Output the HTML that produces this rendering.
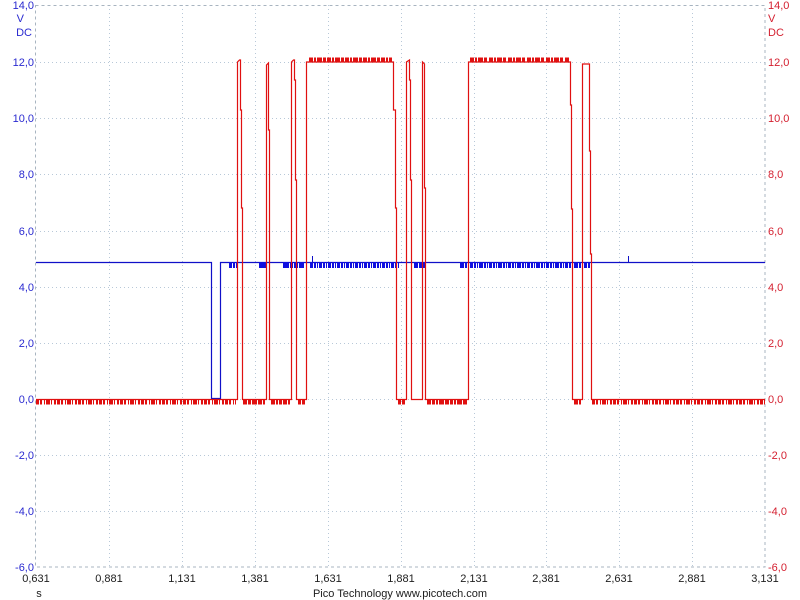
<!DOCTYPE html><html><head><style>
body{margin:0;background:#fff;width:800px;height:600px;overflow:hidden;font-family:"Liberation Sans",Arial,sans-serif}
svg{position:absolute;left:0;top:0}
text{font-size:11px;font-family:"Liberation Sans",Arial,sans-serif}
</style></head><body>
<svg width="800" height="600" viewBox="0 0 800 600">
<g stroke="#b8c8d8" stroke-width="1" stroke-dasharray="1 3">
<line x1="36" y1="62.5" x2="765" y2="62.5"/><line x1="36" y1="118.5" x2="765" y2="118.5"/><line x1="36" y1="174.5" x2="765" y2="174.5"/><line x1="36" y1="231.5" x2="765" y2="231.5"/><line x1="36" y1="287.5" x2="765" y2="287.5"/><line x1="36" y1="343.5" x2="765" y2="343.5"/><line x1="36" y1="399.5" x2="765" y2="399.5"/><line x1="36" y1="455.5" x2="765" y2="455.5"/><line x1="36" y1="511.5" x2="765" y2="511.5"/>
<line x1="109.5" y1="5" x2="109.5" y2="567"/><line x1="182.5" y1="5" x2="182.5" y2="567"/><line x1="255.5" y1="5" x2="255.5" y2="567"/><line x1="328.5" y1="5" x2="328.5" y2="567"/><line x1="401.5" y1="5" x2="401.5" y2="567"/><line x1="474.5" y1="5" x2="474.5" y2="567"/><line x1="546.5" y1="5" x2="546.5" y2="567"/><line x1="619.5" y1="5" x2="619.5" y2="567"/><line x1="692.5" y1="5" x2="692.5" y2="567"/>
</g>
<g stroke="#a8b4c0" stroke-width="1" stroke-dasharray="3 3" fill="none">
<rect x="35.5" y="5.5" width="729.5" height="561.5"/>
</g>
<!-- blue -->
<polyline fill="none" stroke="#1010c8" stroke-width="1.2" points="36,262.5 211.5,262.5 211.5,398.5 220.5,398.5 220.5,262.5 765,262.5"/>
<g stroke="#1010e0" stroke-width="6">
<line x1="229" y1="265" x2="237" y2="265" stroke-dasharray="3 1 2 1"/>
<line x1="259" y1="265" x2="266" y2="265"/>
<line x1="283" y1="265" x2="304" y2="265" stroke-dasharray="6 1 3 1 4 1"/>
<line x1="310" y1="265" x2="400" y2="265" stroke-dasharray="3 1 2 1 1 1 3 1 2 1 1 1"/>
<line x1="414" y1="265" x2="425" y2="265" stroke-dasharray="4 1 3 1"/>
<line x1="460" y1="265" x2="590" y2="265" stroke-dasharray="4 1 2 1 1 1 3 1 2 1 1 1"/>
</g>
<line x1="312.5" y1="256" x2="312.5" y2="263" stroke="#1010c8"/>
<line x1="628.5" y1="256" x2="628.5" y2="263" stroke="#1010c8"/>
<!-- red -->
<polyline fill="none" stroke="#e01010" stroke-width="1.2" points="36,399.5 237.5,399.5 237.5,62 239.5,60 240.5,60 240.5,110 241.5,110 241.5,208 242.5,208 242.5,399.5 266.5,399.5 266.5,65 268.5,63 268.5,130 269.5,130 269.5,399.5 291.5,399.5 291.5,62 293.5,60 294.5,60 294.5,80 295.5,80 295.5,180 296.5,180 296.5,399.5 306.5,399.5 306.5,62 393.5,62 393.5,110 395.5,110 395.5,208 396.5,208 396.5,399.5 406.5,399.5 406.5,62 409.5,60 409.5,80 410.5,80 410.5,180 411.5,180 411.5,399.5 422.5,399.5 422.5,62 424.5,64 424.5,188 425.5,188 425.5,399.5 468.5,399.5 468.5,62 570.5,62 570.5,105 571.5,105 571.5,209 572.5,209 572.5,399.5 582.5,399.5 582.5,64 589.5,64 589.5,151 590.5,151 590.5,254 591.5,254 591.5,399.5 765,399.5"/>
<g stroke="#e01010" stroke-width="5">
<line x1="36" y1="402" x2="236" y2="402" stroke-dasharray="3 1 2 2 1 1 4 1 1 2 2 1"/>
<line x1="243" y1="402" x2="265" y2="402" stroke-dasharray="4 1 3 1 5 1"/>
<line x1="271" y1="402" x2="290" y2="402" stroke-dasharray="4 1 2 1 3 1"/>
<line x1="298" y1="402" x2="305" y2="402" stroke-dasharray="3 1"/>
<line x1="398" y1="402" x2="405" y2="402" stroke-dasharray="3 1"/>
<line x1="427" y1="402" x2="467" y2="402" stroke-dasharray="4 1 3 1 2 1 5 1"/>
<line x1="574" y1="402" x2="581" y2="402" stroke-dasharray="4 1"/>
<line x1="592" y1="402" x2="765" y2="402" stroke-dasharray="3 1 2 2 1 1 4 1 1 2 2 1"/>
<line x1="309" y1="60" x2="392" y2="60" stroke-dasharray="4 1 2 1 5 1 3 1"/>
<line x1="470" y1="60" x2="569" y2="60" stroke-dasharray="4 1 2 1 5 1 3 2"/>
</g>
<g fill="#2a2ad0" text-anchor="end">
<text x="34" y="9">14,0</text><text x="24" y="22">V</text><text x="32" y="36">DC</text>
<text x="34" y="66">12,0</text><text x="34" y="122">10,0</text><text x="34" y="178">8,0</text><text x="34" y="235">6,0</text><text x="34" y="291">4,0</text><text x="34" y="347">2,0</text><text x="34" y="403">0,0</text><text x="34" y="459">-2,0</text><text x="34" y="515">-4,0</text><text x="34" y="571">-6,0</text>
</g>
<g fill="#d42030">
<text x="768" y="9">14,0</text><text x="768" y="22">V</text><text x="768" y="36">DC</text>
<text x="768" y="66">12,0</text><text x="768" y="122">10,0</text><text x="768" y="178">8,0</text><text x="768" y="235">6,0</text><text x="768" y="291">4,0</text><text x="768" y="347">2,0</text><text x="768" y="403">0,0</text><text x="768" y="459">-2,0</text><text x="768" y="515">-4,0</text><text x="768" y="571">-6,0</text>
</g>
<g fill="#202020" text-anchor="middle">
<text x="36" y="582">0,631</text><text x="109" y="582">0,881</text><text x="182" y="582">1,131</text><text x="255" y="582">1,381</text><text x="328" y="582">1,631</text><text x="401" y="582">1,881</text><text x="474" y="582">2,131</text><text x="546" y="582">2,381</text><text x="619" y="582">2,631</text><text x="692" y="582">2,881</text><text x="765" y="582">3,131</text>
<text x="39" y="597">s</text>
<text x="400" y="597">Pico Technology  www.picotech.com</text>
</g>
</svg>
</body></html>
